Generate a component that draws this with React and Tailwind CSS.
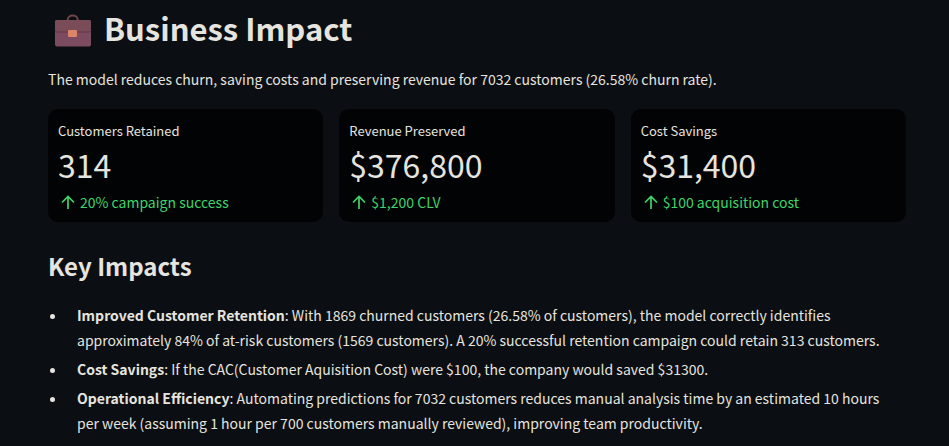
const metrics = [
  { label: "Customers Retained", value: "314", delta: "20% campaign success" },
  { label: "Revenue Preserved", value: "$376,800", delta: "$1,200 CLV" },
  { label: "Cost Savings", value: "$31,400", delta: "$100 acquisition cost" },
];

const impacts = [
  {
    title: "Improved Customer Retention",
    text: "With 1869 churned customers (26.58% of customers), the model correctly identifies approximately 84% of at-risk customers (1569 customers). A 20% successful retention campaign could retain 313 customers.",
  },
  {
    title: "Cost Savings",
    text: "If the CAC(Customer Aquisition Cost) were $100, the company would saved $31300.",
  },
  {
    title: "Operational Efficiency",
    text: "Automating predictions for 7032 customers reduces manual analysis time by an estimated 10 hours per week (assuming 1 hour per 700 customers manually reviewed), improving team productivity.",
  },
];

function Briefcase() {
  return (
    <svg viewBox="0 0 38 34" className="mt-1.5 h-[34px] w-[38px] shrink-0" aria-hidden="true">
      <path d="M13.700 6.500V5.500a5 4 0 0 1 10 0v1" fill="none" stroke="#70464b" strokeWidth="2" />
      <rect x="1" y="6" width="36" height="26.500" rx="2" fill="#7c4b60" />
      <path d="M1 8a2 2 0 0 1 2-2h32a2 2 0 0 1 2 2v8a2 2 0 0 1-2 2H3a2 2 0 0 1-2-2z" fill="#794c57" />
      <path d="M1 16a2 2 0 0 0 2 2h32a2 2 0 0 0 2-2" fill="none" stroke="#653650" strokeWidth="1" />
      <rect x="14" y="16" width="9" height="7" rx="1" fill="#da8568" />
    </svg>
  );
}

function ArrowUp() {
  return (
    <svg viewBox="0 0 20 20" className="size-5 shrink-0" fill="none" stroke="currentColor" strokeWidth="1.700" aria-hidden="true">
      <path d="M10 16V3.500M4 9.500l6-6 6 6" />
    </svg>
  );
}

export default function App() {
  return (
    <main className="min-h-screen bg-[#0b0e12] pt-2 pr-[43px] pb-2 pl-12 font-['Source_Sans_Pro','Noto_Sans_CJK_JP',sans-serif] text-sm leading-[25px] text-[#e6e4df]">
      <h1 className="flex h-10 items-center gap-3 pl-[6px] text-[31px] leading-10 font-bold">
        <Briefcase />
        Business Impact
      </h1>
      <p className="mt-[19px]">
        The model reduces churn, saving costs and preserving revenue for 7032 customers (26.58% churn rate).
      </p>
      <dl className="mt-[17px] grid grid-cols-3 gap-4">
        {metrics.map((m) => (
          <div key={m.label} className="rounded-[10px] bg-[#020304] px-[10px] pt-[10px] pb-2">
            <dt className="text-[13px] leading-6">{m.label}</dt>
            <dd className="text-[32px] leading-[42px]">{m.value}</dd>
            <dd className="mt-1.5 flex h-[23px] items-center text-[#3fd469]">
              <ArrowUp />
              <span className="ml-[2px]">{m.delta}</span>
            </dd>
          </div>
        ))}
      </dl>
      <h2 className="mt-[26px] text-2xl leading-9 font-bold">Key Impacts</h2>
      <ul className="mt-[19px] space-y-1 pr-4">
        {impacts.map((i) => (
          <li key={i.title} className="flex">
            <span className="mt-[11px] mr-[22px] ml-[2px] size-[5px] shrink-0 rounded-full bg-[#e6e4df]" />
            <p>
              <strong className="font-bold">{i.title}</strong>: {i.text}
            </p>
          </li>
        ))}
      </ul>
    </main>
  );
}
